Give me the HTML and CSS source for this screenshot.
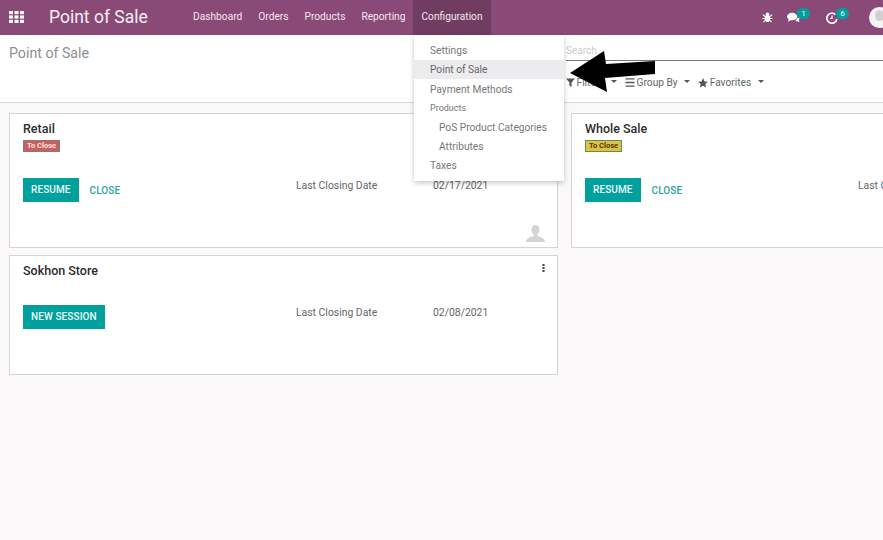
FILE: index.html
```html
<!DOCTYPE html>
<html lang="en">
<head>
<meta charset="utf-8">
<title>Point of Sale</title>
<link rel="stylesheet" href="styles.css">
</head>
<body>
<header class="navbar">
  <svg class="apps" viewBox="0 0 15 12" width="15" height="12"><g fill="#fff"><rect x="0" y="0" width="4" height="3.2"/><rect x="5.5" y="0" width="4" height="3.2"/><rect x="11" y="0" width="4" height="3.2"/><rect x="0" y="4.4" width="4" height="3.2"/><rect x="5.5" y="4.4" width="4" height="3.2"/><rect x="11" y="4.4" width="4" height="3.2"/><rect x="0" y="8.8" width="4" height="3.2"/><rect x="5.5" y="8.8" width="4" height="3.2"/><rect x="11" y="8.8" width="4" height="3.2"/></g></svg>
  <span class="brand">Point of Sale</span>
  <nav class="menu">
    <span class="menu-item">Dashboard</span>
    <span class="menu-item">Orders</span>
    <span class="menu-item">Products</span>
    <span class="menu-item">Reporting</span>
    <span class="menu-item active">Configuration</span>
  </nav>
  <div class="systray">
    <svg class="bug" viewBox="0 0 12 12" width="11" height="11"><g stroke="#fff" stroke-width="1.1" fill="none"><path d="M1 3l2.5 2M11 3L8.5 5M.5 7h3M11.500 7h-3M1.500 11l2-2M10.500 11l-2-2"/></g><ellipse cx="6" cy="7" rx="3" ry="4" fill="#fff"/><circle cx="6" cy="2.500" r="2" fill="#fff"/></svg>
    <span class="tray-item tray-chat">
      <svg viewBox="0 0 14 11" width="13" height="11"><ellipse cx="5.500" cy="4.500" rx="5.500" ry="4" fill="#fff"/><path d="M2 7l-1 3 4-2z" fill="#fff"/><path d="M9 9.500c2 0 3 .2 4.500 1.200l-.8-2.200 1-2-2-1z" fill="#fff"/></svg>
      <span class="badge">1</span>
    </span>
    <span class="tray-item tray-clock">
      <svg viewBox="0 0 12 12" width="12" height="12"><path d="M9.300 2.600a5 5 0 1 0 1.500 4.400" fill="none" stroke="#fff" stroke-width="1.700"/><path d="M6 3.500v3h-1.800" fill="none" stroke="#fff" stroke-width="1.200"/></svg>
      <span class="badge">6</span>
    </span>
    <span class="avatar"><span class="avatar-head"></span></span>
  </div>
</header>

<section class="control-panel">
  <div class="cp-left">Point of Sale</div>
  <div class="cp-right">
    <div class="search">Search...</div>
    <div class="filters">
      <span class="filter"><svg viewBox="0 0 10 10" width="9" height="9"><path d="M0 .5h10L6.200 5v5L3.800 8.500V5z" fill="#555"/></svg>Filters<i class="caret"></i></span>
      <span class="filter"><svg viewBox="0 0 10 10" width="10" height="9"><path d="M0 1h10M0 5h10M0 9h10" stroke="#555" stroke-width="1.500"/></svg>Group By<i class="caret"></i></span>
      <span class="filter"><svg viewBox="0 0 10 10" width="10" height="10"><path d="M5 0l1.500 3.400 3.500.3-2.700 2.300.9 3.600L5 7.700 1.800 9.600l.9-3.600L0 3.700l3.500-.3z" fill="#555"/></svg>Favorites<i class="caret"></i></span>
    </div>
  </div>
</section>

<main class="kanban">
  <article class="card card-tall">
    <h2 class="card-title">Retail</h2>
    <span class="tag tag-red">To Close</span>
    <div class="card-row">
      <div class="actions"><span class="btn">RESUME</span><span class="link">CLOSE</span></div>
      <div class="closing"><span class="closing-label">Last Closing Date</span><span class="closing-date">02/17/2021</span></div>
    </div>
    <svg class="user" viewBox="0 0 18 16" width="19" height="17"><path d="M9 0c2.500 0 3.800 2 3.800 4.500 0 2-1 3.500-2 4.500v1.300c3 1 7.200 2 7.200 5.700H0c0-3.700 4.200-4.700 7.200-5.700V9c-1-1-2-2.500-2-4.500C5.200 2 6.500 0 9 0z" fill="#d4d4d4"/></svg>
  </article>
  <article class="card card-tall">
    <h2 class="card-title">Whole Sale</h2>
    <span class="tag tag-yellow">To Close</span>
    <div class="card-row">
      <div class="actions"><span class="btn">RESUME</span><span class="link">CLOSE</span></div>
      <div class="closing"><span class="closing-label">Last Closing Date</span><span class="closing-date">02/17/2021</span></div>
    </div>
  </article>
  <article class="card card-short">
    <h2 class="card-title">Sokhon Store</h2>
    <svg class="kebab" viewBox="0 0 3 9" width="3" height="8"><g fill="#444"><rect x=".3" width="2.400" height="2.200"/><rect x=".3" y="3.400" width="2.400" height="2.200"/><rect x=".3" y="6.800" width="2.400" height="2.200"/></g></svg>
    <div class="card-row card-row-short">
      <div class="actions"><span class="btn">NEW SESSION</span></div>
      <div class="closing"><span class="closing-label">Last Closing Date</span><span class="closing-date">02/08/2021</span></div>
    </div>
  </article>
</main>

<div class="dropdown">
  <div class="dd-item">Settings</div>
  <div class="dd-item dd-hover">Point of Sale</div>
  <div class="dd-item dd-pay">Payment Methods</div>
  <div class="dd-head">Products</div>
  <div class="dd-item dd-sub dd-first">PoS Product Categories</div>
  <div class="dd-item dd-sub">Attributes</div>
  <div class="dd-item">Taxes</div>
</div>

<svg class="arrow" viewBox="0 0 86 44" width="86" height="44"><path d="M0 23L34 1l2 13 49-3v13l-50 4 2 14z" fill="#000"/></svg>
</body>
</html>
```

FILE: styles.css
```css
* { box-sizing: border-box; }
html, body { margin: 0; padding: 0; }
body {
  width: 883px;
  height: 540px;
  overflow: hidden;
  position: relative;
  background: #faf8f9;
  font-family: Roboto, "Liberation Sans", sans-serif;
  font-size: 10.2px;
  color: #666;
}

.navbar {
  height: 35px;
  background: #8a4a78;
  display: flex;
  align-items: center;
  color: #fff;
}
.apps { margin: 0 0 2px 9px; flex: none; }
.brand { margin: 0 0 2px 25px; font-size: 17.500px; color: #f6eff4; width: 136px; flex: none; }
.menu { display: flex; height: 35px; }
.menu-item {
  padding: 0 8px 2px;
  display: flex;
  align-items: center;
  font-size: 10.2px;
  color: #f3e7ef;
}
.menu-item.active { background: #713c62; }
.systray { display: flex; align-items: center; margin-left: auto; }
.bug { margin-right: 14px; }
.tray-item { display: flex; align-items: center; position: relative; }
.tray-chat { width: 39px; }
.tray-clock { width: 43px; }
.badge {
  position: absolute;
  top: -4px;
  left: 10px;
  width: 13px;
  height: 11px;
  border-radius: 6px;
  background: #00a09d;
  color: #fff;
  font-size: 8px;
  line-height: 11px;
  text-align: center;
}
.avatar {
  width: 21px;
  height: 21px;
  margin-right: -7px;
  border-radius: 50%;
  background: #f4f2f3;
  display: block;
  overflow: hidden;
}
.avatar-head { display: block; width: 9px; height: 11px; margin: 3px 0 0 6px; border-radius: 50%; background: #d3d0d2; }

.control-panel {
  height: 68px;
  background: #fff;
  border-bottom: 1px solid #d9d7d8;
  display: flex;
}
.cp-left { width: 566px; padding: 10px 0 0 9px; font-size: 14.2px; color: #8f8f8f; }
.cp-right { flex: 1; padding-top: 10px; }
.search {
  height: 16px;
  border-bottom: 1px solid #777;
  color: #ccc;
  font-size: 10px;
  line-height: 12px;
}
.filters { display: flex; gap: 8px; margin-top: 16px; }
.filter { display: flex; align-items: center; gap: 1.500px; font-size: 10.2px; color: #666; }
.caret {
  margin-left: 5px;
  border-left: 3px solid transparent;
  border-right: 3px solid transparent;
  border-top: 3px solid #555;
  margin-top: -2px;
}

.kanban {
  display: grid;
  grid-template-columns: 549px 549px;
  grid-template-rows: 135px 120px;
  gap: 7px 13px;
  padding: 10px 0 0 9px;
  width: 883px;
  overflow: hidden;
}
.card {
  position: relative;
  background: #fff;
  border: 1px solid #d5d3d4;
  padding: 7px 13px;
}
.card-title { margin: 0; font-size: 12.500px; font-weight: 500; line-height: 15px; color: #2c2c2c; }
.tag {
  display: block;
  width: 37px;
  margin-top: 4px;
  height: 12px;
  border: 1px solid;
  font-size: 7.500px;
  font-weight: 700;
  line-height: 10px;
  text-align: center;
}
.tag-red { background: #cc5f5d; border-color: #7d7d7d; color: #f9e1e0; }
.tag-yellow { background: #e3bf48; border-color: #4f9a50; color: #4d3d05; }
.card-row { display: flex; margin-top: 26px; }
.card-row-short { margin-top: 27px; }
.actions { display: flex; align-items: center; width: 273px; flex: none; height: 24px; }
.btn {
  height: 24px;
  padding: 0 8px;
  background: #00a09d;
  color: #eafafa;
  font-size: 10px;
  font-weight: 500;
  line-height: 24px;
  letter-spacing: .1px;
}
.link { margin-left: 11px; color: #2aa3a1; font-size: 10px; font-weight: 500; letter-spacing: .1px; }
.closing { display: flex; margin-top: 2px; font-size: 10.4px; line-height: 12px; }
.closing-label { width: 137px; flex: none; }
.user { position: absolute; right: 12px; bottom: 5px; }
.kebab { position: absolute; top: 8px; right: 12px; }

.dropdown {
  position: absolute;
  left: 414px;
  top: 35px;
  width: 150px;
  height: 146px;
  background: #fff;
  box-shadow: 0 2px 5px rgba(0,0,0,.22);
  padding-top: 6px;
  font-size: 10.2px;
  color: #777;
}
.dd-item { height: 19px; line-height: 19px; padding-left: 16px; }
.dd-hover { background: #ececee; color: #666; }
.dd-pay { margin-top: 1px; }
.dd-head { height: 17px; margin-top: 1px; line-height: 17px; padding-left: 16px; font-size: 9px; }
.dd-sub { padding-left: 25px; }
.dd-first { margin-top: 1px; }

.arrow { position: absolute; left: 570px; top: 50px; }
```
